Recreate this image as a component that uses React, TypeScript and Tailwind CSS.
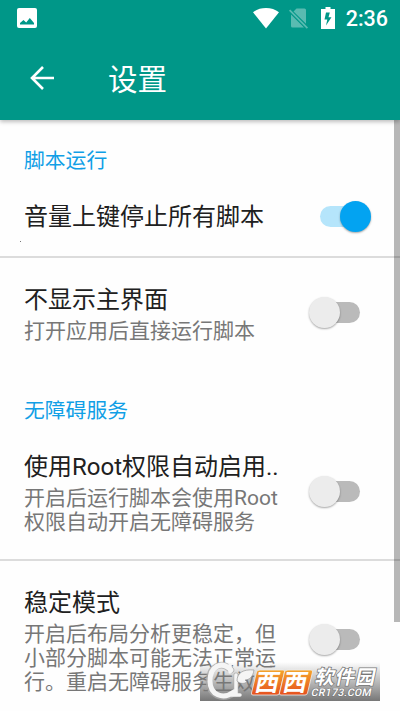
import { clsx } from 'clsx';

interface SettingRowProps {
    title: string;
    summary?: string[];
    checked?: boolean;
    className?: string;
    switchClassName?: string;
}

function StatusBar() {
    return (
        <div className="flex h-9 items-center pl-[17px] pr-3 text-white">
            <svg className="h-5 w-5" viewBox="0 0 20 20" fill="none">
                <rect width="20" height="20" rx="2" fill="currentColor" />
                <path d="M3 16.5v-1.500L6.500 12l2.700 2.500L12.800 10l4.200 5v1.500Z" fill="#009788" />
            </svg>
            <svg className="ml-auto h-[21px] w-[26px]" viewBox="0 0 26 21" fill="currentColor">
                <path d="M13 20.500 0 4.300C3.500 1.400 8.200 0 13 0s9.500 1.400 13 4.300Z" />
            </svg>
            <svg className="ml-[10px] h-[21px] w-[19px] opacity-35" viewBox="0 0 19 21" fill="currentColor">
                <path d="M7.500.500h8A1.500 1.500 0 0 1 17 2v13.800L4.500 3.500ZM2 6.500l13 13H3.500A1.500 1.500 0 0 1 2 18Z" />
                <path d="M1.200 1.500 19 19.500l-1.200 1.200L0 2.700Z" />
            </svg>
            <svg className="ml-[13px] h-[22px] w-[14px]" viewBox="0 0 14 22">
                <path d="M4.500 0h5v2H14v20H0V2h4.500Z" fill="currentColor" />
                <path d="M8.800 5.500H5L3.500 12.500h2.800L5 18.500l5.500-8.300H7.500Z" fill="#009788" />
            </svg>
            <span className="ml-[11px] pt-0.5 text-[21.5px] font-medium leading-9">2:36</span>
        </div>
    );
}

function AppBar() {
    return (
        <header className="relative h-[120px] bg-[#009788] shadow-[0_2px_4px_rgba(0,0,0,0.25)]">
            <StatusBar />
            <div className="flex h-[84px] items-center pl-[30px] text-white">
                <svg className="h-6 w-6" viewBox="0 0 24 24" fill="none" stroke="currentColor" strokeWidth="2.6">
                    <path d="M24 12H2M13 1 2 12l11 11" />
                </svg>
                <h1 className="ml-[54px] pt-[3px] text-[29.5px] leading-9">设置</h1>
            </div>
        </header>
    );
}

function Switch({ checked }: { checked?: boolean }) {
    return (
        <div
            role="switch"
            aria-checked={!!checked}
            className={clsx('flex h-[31px] w-[62px] items-center', checked && 'justify-end')}
        >
            <div
                className={clsx(
                    'flex h-[21px] w-[51px] items-center rounded-full',
                    checked
                        ? 'justify-end bg-linear-to-r from-[#b5e5fb] from-80% to-transparent to-80%'
                        : 'bg-linear-to-r from-transparent from-20% to-[#bababa] to-20%',
                )}
            >
                <div
                    className={clsx(
                        'h-[31px] w-[31px] shrink-0 rounded-full shadow-[0_1px_2px_rgba(0,0,0,0.35)]',
                        checked ? 'bg-[#03a3f1]' : 'bg-[#ececec]',
                    )}
                />
            </div>
        </div>
    );
}

function SettingRow({ title, summary, checked, className, switchClassName }: SettingRowProps) {
    return (
        <div className={clsx('flex items-center justify-between pl-6', className)}>
            <div className="whitespace-nowrap">
                <h3 className="text-[24px] leading-8 text-[#202020]">{title}</h3>
                {summary && (
                    <p className="mt-[3px] text-[21px] leading-6 text-[#777]">
                        {summary.map((line) => (
                            <span key={line} className="block">
                                {line}
                            </span>
                        ))}
                    </p>
                )}
            </div>
            <div className={clsx('mr-[29px]', switchClassName)}>
                <Switch checked={checked} />
            </div>
        </div>
    );
}

function SectionTitle({ children }: { children: string }) {
    return <h2 className="pl-6 text-[20.8px] leading-8 text-[#109fe6]">{children}</h2>;
}

function Divider() {
    return <div className="h-0.5 shrink-0 bg-[#dcdcdc]" />;
}

function Watermark() {
    return (
        <div className="absolute left-[200px] top-[662px] h-[39px] w-[180px] bg-linear-to-b from-transparent to-[#777]">
            <svg className="h-full w-full overflow-visible" viewBox="0 0 180 39">
                <defs>
                    <linearGradient id="tile" x1="0" y1="0" x2="0" y2="1">
                        <stop offset="0" stopColor="#f5a52c" />
                        <stop offset="1" stopColor="#e5501f" />
                    </linearGradient>
                </defs>
                <g fill="none" stroke="#aaa" strokeLinecap="round" opacity="0.8">
                    <path d="M31 8C21-2 9 5 9 19s13 20 25 12" strokeWidth="6.500" />
                    <path d="M36 13v19" strokeWidth="5" />
                </g>
                <g fill="none" stroke="#f5f5f5" strokeLinecap="round">
                    <path d="M31 8C21-2 10 5 10 19s13 19 24 11" strokeWidth="5" />
                    <path d="M30 3v7M36 13v19M32 33h8" strokeWidth="3.500" />
                </g>
                <path d="M37 19c0-8 6-12 17-11-1 7-5 10-9 10l2 2c-3 2-7 2-10-1Z" fill="#f5f5f5" stroke="#999" strokeWidth="0.7" />
                <g fill="url(#tile)" stroke="#eee" strokeWidth="0.8">
                    <path d="M60 8h23q2 0 1.500 2l-5 21q-.5 2-2.500 2H53q-2 0-1.500-2l5-21q.5-2 3.500-2Z" />
                    <path d="M88 8h23q2 0 1.500 2l-5 21q-.5 2-2.500 2H81q-2 0-1.500-2l5-21q.5-2 3.500-2Z" />
                </g>
                <g transform="skewX(-12)" fontFamily="Roboto, 'Noto Sans CJK SC', sans-serif">
                    <text x="60" y="29" fontSize="24" fontWeight="700" fill="#fff">西</text>
                    <text x="88" y="29" fontSize="24" fontWeight="700" fill="#fff">西</text>
                    <g fill="#fff" stroke="#777" paintOrder="stroke">
                        <text x="119" y="22" fontSize="19.5" fontWeight="700" strokeWidth="1.500" textLength="60">软件园</text>
                        <text x="118" y="34" fontSize="10.5" fontWeight="500" strokeWidth="1.200" textLength="60">CR173.COM</text>
                    </g>
                </g>
            </svg>
        </div>
    );
}

export default function App() {
    return (
        <div className="relative h-[711px] w-[400px] overflow-hidden bg-[#fefefe] font-[Roboto,'Noto_Sans_CJK_SC',sans-serif]">
            <AppBar />
            <main className="flex flex-col pt-[25px]">
                <SectionTitle>脚本运行</SectionTitle>
                <SettingRow
                    title="音量上键停止所有脚本"
                    checked
                    className="h-[79px] pt-px"
                    switchClassName="mb-px"
                />
                <Divider />
                <SettingRow
                    title="不显示主界面"
                    summary={['打开应用后直接运行脚本']}
                    className="h-[112px] pb-px"
                    switchClassName="mb-[3px]"
                />
                <div className="h-[25px]" />
                <SectionTitle>无障碍服务</SectionTitle>
                <SettingRow
                    title="使用Root权限自动启用.."
                    summary={['开启后运行脚本会使用Root', '权限自动开启无障碍服务']}
                    className="h-[132px] pb-0.5"
                    switchClassName="mb-px"
                />
                <Divider />
                <SettingRow
                    title="稳定模式"
                    summary={['开启后布局分析更稳定，但', '小部分脚本可能无法正常运', '行。重启无障碍服务生效']}
                    className="h-[158px]"
                    switchClassName="mb-0.5"
                />
            </main>
            <div className="absolute right-0 top-[120px] h-[502px] w-1.5 bg-black/28" />
            <div className="absolute left-5 top-[241px] h-px w-px bg-[#777]" />
            <Watermark />
        </div>
    );
}
